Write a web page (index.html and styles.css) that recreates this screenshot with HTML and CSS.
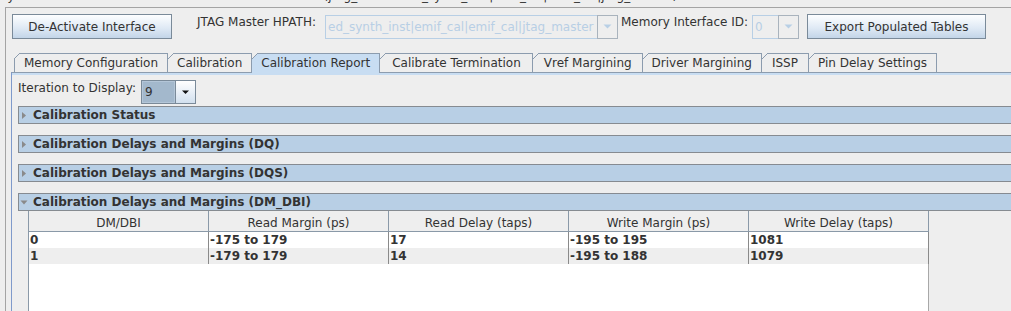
FILE: index.html
```html
<!DOCTYPE html>
<html lang="en">
<head>
  <meta charset="UTF-8" />
  <title>EMIF Calibration Report</title>
  <link rel="stylesheet" href="styles.css">
</head>
<body>
  <div class="caption"><span>System Console: Toolkits &gt; EMIF Toolkit &gt; Interface 0 (jtag_master: ed_synth_inst|emif_cal|emif_cal|jtag_master)</span></div>

  <div class="frame">
    <div class="toolbar">
      <button class="btn btn-deact">De-Activate Interface</button>
      <span class="lbl lbl-hpath">JTAG Master HPATH:</span>
      <div class="combo combo-off combo-hpath">
        <span class="combo-field">ed_synth_inst|emif_cal|emif_cal|jtag_master</span>
        <span class="combo-arrow"><svg width="9" height="5" viewBox="0 0 9 5"><polygon points="0.5,0.5 8.5,0.5 4.5,4.5" /></svg></span>
      </div>
      <span class="lbl lbl-id">Memory Interface ID:</span>
      <div class="combo combo-off combo-id">
        <span class="combo-field">0</span>
        <span class="combo-arrow"><svg width="9" height="5" viewBox="0 0 9 5"><polygon points="0.5,0.5 8.5,0.5 4.5,4.5" /></svg></span>
      </div>
      <button class="btn btn-export">Export Populated Tables</button>
    </div>

    <div class="tabs">
      <div class="tab-row">
        <div class="tab">Memory Configuration</div>
        <div class="tab">Calibration</div>
        <div class="tab active">Calibration Report</div>
        <div class="tab tab-wide">Calibrate Termination</div>
        <div class="tab tab-mid">Vref Margining</div>
        <div class="tab">Driver Margining</div>
        <div class="tab tab-issp">ISSP</div>
        <div class="tab">Pin Delay Settings</div>
      </div>

      <div class="tab-body">
        <div class="tab-band"></div>
        <div class="tab-content">
          <div class="iter-row">
            <span class="lbl">Iteration to Display:</span>
            <div class="combo combo-iter">
              <span class="combo-field">9</span>
              <span class="combo-arrow"><svg width="9" height="5" viewBox="0 0 9 5"><polygon points="1,0.5 8,0.5 4.5,4" /></svg></span>
            </div>
          </div>

          <div class="section">
            <div class="section-bar"><svg class="tri" width="9" height="9" viewBox="0 0 9 9"><polygon points="2,1 6,4.5 2,8" /></svg>Calibration Status</div>
          </div>
          <div class="section">
            <div class="section-bar"><svg class="tri" width="9" height="9" viewBox="0 0 9 9"><polygon points="2,1 6,4.5 2,8" /></svg>Calibration Delays and Margins (DQ)</div>
          </div>
          <div class="section">
            <div class="section-bar"><svg class="tri" width="9" height="9" viewBox="0 0 9 9"><polygon points="2,1 6,4.5 2,8" /></svg>Calibration Delays and Margins (DQS)</div>
          </div>
          <div class="section">
            <div class="section-bar"><svg class="tri" width="9" height="9" viewBox="0 0 9 9"><polygon points="0.5,2.5 7.5,2.5 4,6.5" /></svg>Calibration Delays and Margins (DM_DBI)</div>

            <div class="table">
              <div class="trow thead">
                <div class="th">DM/DBI</div>
                <div class="th">Read Margin (ps)</div>
                <div class="th">Read Delay (taps)</div>
                <div class="th">Write Margin (ps)</div>
                <div class="th">Write Delay (taps)</div>
              </div>
              <div class="trow">
                <div class="td">0</div>
                <div class="td">-175 to 179</div>
                <div class="td">17</div>
                <div class="td">-195 to 195</div>
                <div class="td">1081</div>
              </div>
              <div class="trow odd">
                <div class="td">1</div>
                <div class="td">-179 to 179</div>
                <div class="td">14</div>
                <div class="td">-195 to 188</div>
                <div class="td">1079</div>
              </div>
              <div class="table-fill"></div>
            </div>
          </div>
        </div>
      </div>
    </div>
  </div>
</body>
</html>
```

FILE: styles.css
```css
body {
  margin: 0;
  height: 311px;
  overflow: hidden;
  background: #eeeeee;
  font: 12px "DejaVu Sans", sans-serif;
  color: #333;
}

.caption {
  height: 7px;
  overflow: hidden;
  white-space: nowrap;
}

.caption span {
  display: block;
  line-height: 14px;
  margin-top: -11px;
}

.frame {
  width: 1060px;
  margin-left: 5px;
  padding: 6px 0 0 5px;
  border-top: 1px solid #a4a4a4;
  border-left: 1px solid #a4a4a4;
}

/* top row */
.toolbar {
  display: flex;
  align-items: center;
  height: 25px;
  padding-left: 1px;
}

.btn {
  box-sizing: border-box;
  height: 25px;
  padding: 0;
  font: inherit;
  color: #333;
  border: 1px solid #7a8a99;
  border-radius: 0;
  background: linear-gradient(#fdfeff, #e0eaf5 55%, #c3d5e8);
}

.btn-deact {
  width: 160px;
}

.btn-export {
  width: 179px;
  margin-left: 8px;
}

.lbl {
  align-self: flex-start;
  margin-top: 1px;
  line-height: 14px;
  white-space: nowrap;
}

.lbl-hpath {
  margin-left: 25px;
}

.lbl-id {
  margin-left: 3px;
}

.combo {
  display: flex;
  box-sizing: border-box;
  height: 24px;
  border: 1px solid #7a8a99;
}

.combo-field {
  flex: 1;
  display: flex;
  align-items: center;
  padding-left: 2px;
  overflow: hidden;
  white-space: nowrap;
}

.combo-arrow {
  width: 19px;
  display: flex;
  align-items: center;
  justify-content: center;
  border-left: 1px solid #7a8a99;
}

.combo-off {
  border-color: #b8cfe5;
  color: #b8cfe5;
}

.combo-off .combo-arrow {
  margin: -1px -1px -1px 0;
  border: 1px solid #a9b3bd;
}

.combo-off svg {
  fill: #b8cfe5;
}

.combo-hpath {
  width: 293px;
  margin-left: 9px;
}

.combo-id {
  width: 47px;
  margin-left: 4px;
}

/* tabs */
.tabs {
  margin-top: 14px;
}

.tab-row {
  display: flex;
  align-items: flex-end;
  height: 19px;
  padding-left: 4px;
}

.tab {
  position: relative;
  z-index: 1;
  box-sizing: border-box;
  height: 19px;
  line-height: 18px;
  padding: 0 9px;
  margin-left: -1px;
  border: 1px solid #8c9cae;
  border-bottom: none;
  white-space: nowrap;
}

.tab-wide {
  padding: 0 11px 0 12px;
}

.tab-mid {
  padding: 0 10px 0 11px;
}

.tab-issp {
  padding: 0 10px;
}

.tab::before {
  content: "";
  position: absolute;
  left: 0;
  top: -1px;
  width: 6px;
  height: 6px;
  background: linear-gradient(to bottom right, #eeeeee calc(50% - 0.6px), #8c9cae calc(50% - 0.6px), #8c9cae calc(50% + 0.6px), transparent calc(50% + 0.6px));
}

.tab:first-child::before {
  left: -1px;
}

.tab.active {
  height: 20px;
  margin-bottom: -1px;
  background: #c8ddf2;
}

.tab-body {
  border-top: 1px solid #8c9cae;
  border-left: 1px solid #7f9acb;
}

.tab-band {
  height: 2px;
  background: #c8ddf2;
}

.tab-content {
  padding: 5px 0 60px 6px;
}

.iter-row {
  display: flex;
  height: 24px;
}

.combo-iter {
  width: 55px;
  margin-left: 5px;
}

.combo-iter .combo-field {
  background: #a3b8cc;
  box-shadow: inset 0 0 0 1px #b4c6d8;
  padding-left: 3px;
}

.combo-iter .combo-arrow {
  background: linear-gradient(#ffffff, #e4ecf5 60%, #d2e0ee);
}

.combo-iter svg {
  fill: #111;
}

/* collapsible sections */
.section {
  margin-top: 11px;
}

.iter-row + .section {
  margin-top: 2px;
}

.section-bar {
  display: flex;
  align-items: center;
  box-sizing: border-box;
  height: 18px;
  padding-left: 1px;
  border: 1px solid #868b91;
  background: #b8cfe5;
  font-weight: bold;
  white-space: nowrap;
}

.tri {
  margin-right: 4px;
  fill: #8a8a8a;
}

/* table */
.table {
  display: flex;
  flex-direction: column;
  width: 900px;
  height: 120px;
  margin-left: 10px;
  background: #fff;
  border-left: 1px solid #8a99a8;
}

.trow {
  display: grid;
  grid-template-columns: repeat(5, 180px);
}

.th {
  box-sizing: border-box;
  height: 21px;
  padding-top: 3px;
  line-height: 18px;
  text-align: center;
  background: #eeeeee;
  border-right: 1px solid #8a99a8;
  border-bottom: 1px solid #8a99a8;
}

.td {
  height: 16px;
  line-height: 17px;
  padding-left: 1px;
  font-weight: bold;
  border-right: 1px solid #8a8a8a;
}

.odd {
  background: #eeeeee;
}

.table-fill {
  flex: 1;
  border-right: 1px solid #a8a8a8;
}
```
